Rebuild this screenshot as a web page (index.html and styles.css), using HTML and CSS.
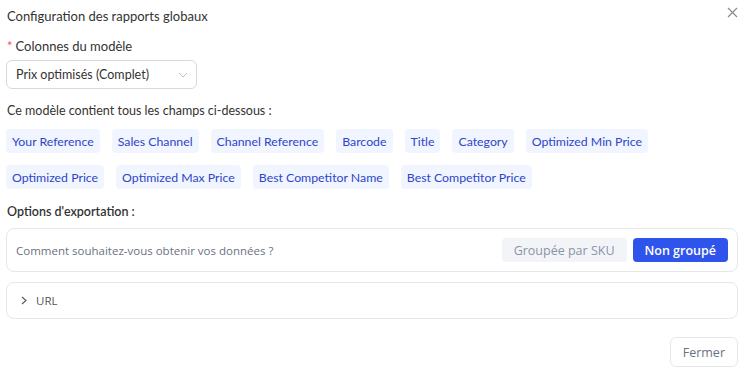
FILE: index.html
```html
<!DOCTYPE html>
<html lang="fr">

<head>
    <meta charset="UTF-8">
    <meta name="viewport" content="width=device-width, initial-scale=1.0">
    <title>Configuration des rapports globaux</title>
    <link rel="stylesheet" href="styles.css">
</head>

<body>
    <div class="modal">
        <div class="modal-header">
            <div class="modal-title">Configuration des rapports globaux</div>
            <button class="close" type="button" aria-label="Fermer">
                <svg width="11" height="11" viewBox="0 0 11 11">
                    <path d="M1 1L10 10M10 1L1 10" stroke="#8c8c8c" stroke-width="1.2" fill="none" />
                </svg>
            </button>
        </div>

        <label class="field-label"><span class="required">*</span>Colonnes du modèle</label>
        <div class="select">
            <span>Prix optimisés (Complet)</span>
            <svg width="10" height="6" viewBox="0 0 10 6">
                <path d="M1 1L5 5L9 1" stroke="#bfbfbf" stroke-width="1" fill="none" />
            </svg>
        </div>

        <div class="section-label">Ce modèle contient tous les champs ci-dessous :</div>
        <div class="tags">
            <span class="tag">Your Reference</span>
            <span class="tag">Sales Channel</span>
            <span class="tag">Channel Reference</span>
            <span class="tag">Barcode</span>
            <span class="tag">Title</span>
            <span class="tag">Category</span>
            <span class="tag">Optimized Min Price</span>
            <span class="tag">Optimized Price</span>
            <span class="tag">Optimized Max Price</span>
            <span class="tag">Best Competitor Name</span>
            <span class="tag">Best Competitor Price</span>
        </div>

        <div class="section-label bold">Options d'exportation :</div>
        <div class="card options">
            <span class="question">Comment souhaitez-vous obtenir vos données ?</span>
            <div class="switch">
                <button type="button" class="opt">Groupée par SKU</button>
                <button type="button" class="opt active">Non groupé</button>
            </div>
        </div>

        <div class="card collapse">
            <svg width="8" height="9" viewBox="0 0 8 9">
                <path d="M2 1L6 4.5L2 8" stroke="#555" stroke-width="1.1" fill="none" />
            </svg>
            <span>URL</span>
        </div>

        <div class="footer">
            <button type="button" class="btn">Fermer</button>
        </div>
    </div>
</body>

</html>
```

FILE: styles.css
```css
body {
    margin: 0;
    background: #fff;
    font-family: "Lato", "Noto Sans", sans-serif;
    color: #333;
}

.modal {
    display: flex;
    flex-direction: column;
    padding: 0 7px 0 6px;
}

.modal-header {
    display: flex;
    justify-content: space-between;
    align-items: center;
    height: 32px;
    padding-left: 1px;
}

.modal-title {
    font-size: 13px;
    color: #333;
}

.close {
    border: none;
    background: none;
    padding: 0;
    margin-top: -7px;
    display: flex;
}

.field-label {
    font-size: 13px;
    margin-top: 6px;
    padding-left: 1px;
}

.required {
    color: #ff4d4f;
    margin-right: 3px;
}

.select {
    display: flex;
    align-items: center;
    justify-content: space-between;
    width: 191px;
    height: 29px;
    box-sizing: border-box;
    margin-top: 6px;
    padding: 0 8px 0 9px;
    border: 1px solid #d9d9d9;
    border-radius: 6px;
    font-size: 12.5px;
}

.section-label {
    font-size: 12.5px;
    margin-top: 14px;
    padding-left: 1px;
}

.section-label.bold {
    font-weight: 600;
    margin-top: 15px;
}

.tags {
    display: flex;
    flex-wrap: wrap;
    gap: 12px;
    margin-top: 11px;
}

.tag {
    display: flex;
    align-items: center;
    height: 24px;
    padding: 0 6px;
    border-radius: 4px;
    background: #f0f5ff;
    color: #2f45c8;
    font-size: 12.3px;
}

.card {
    border: 1px solid #e5e7eb;
    border-radius: 8px;
    box-sizing: border-box;
}

.options {
    display: flex;
    justify-content: space-between;
    align-items: center;
    height: 44px;
    margin-top: 9px;
    padding: 0 9px;
    font-family: "Open Sans", sans-serif;
}

.question {
    font-size: 11.5px;
    color: #6b7280;
}

.switch {
    display: flex;
    gap: 6px;
}

.opt {
    height: 24px;
    border: none;
    border-radius: 4px;
    padding: 0 12px;
    font-family: "Open Sans", sans-serif;
    font-size: 12.5px;
    background: #f3f4f8;
    color: #8a94a6;
}

.opt.active {
    background: #2f54eb;
    color: #fff;
    font-weight: 600;
}

.collapse {
    display: flex;
    align-items: center;
    gap: 8px;
    height: 37px;
    margin-top: 10px;
    padding: 0 13px;
    font-family: "Open Sans", sans-serif;
    font-size: 11.5px;
    color: #555;
}

.footer {
    display: flex;
    justify-content: flex-end;
    margin-top: 18px;
}

.btn {
    height: 30px;
    padding: 0 12px;
    border: 1px solid #e5e7eb;
    border-radius: 6px;
    background: #fff;
    font-family: "Open Sans", sans-serif;
    font-size: 12.5px;
    color: #6b7280;
}
```
